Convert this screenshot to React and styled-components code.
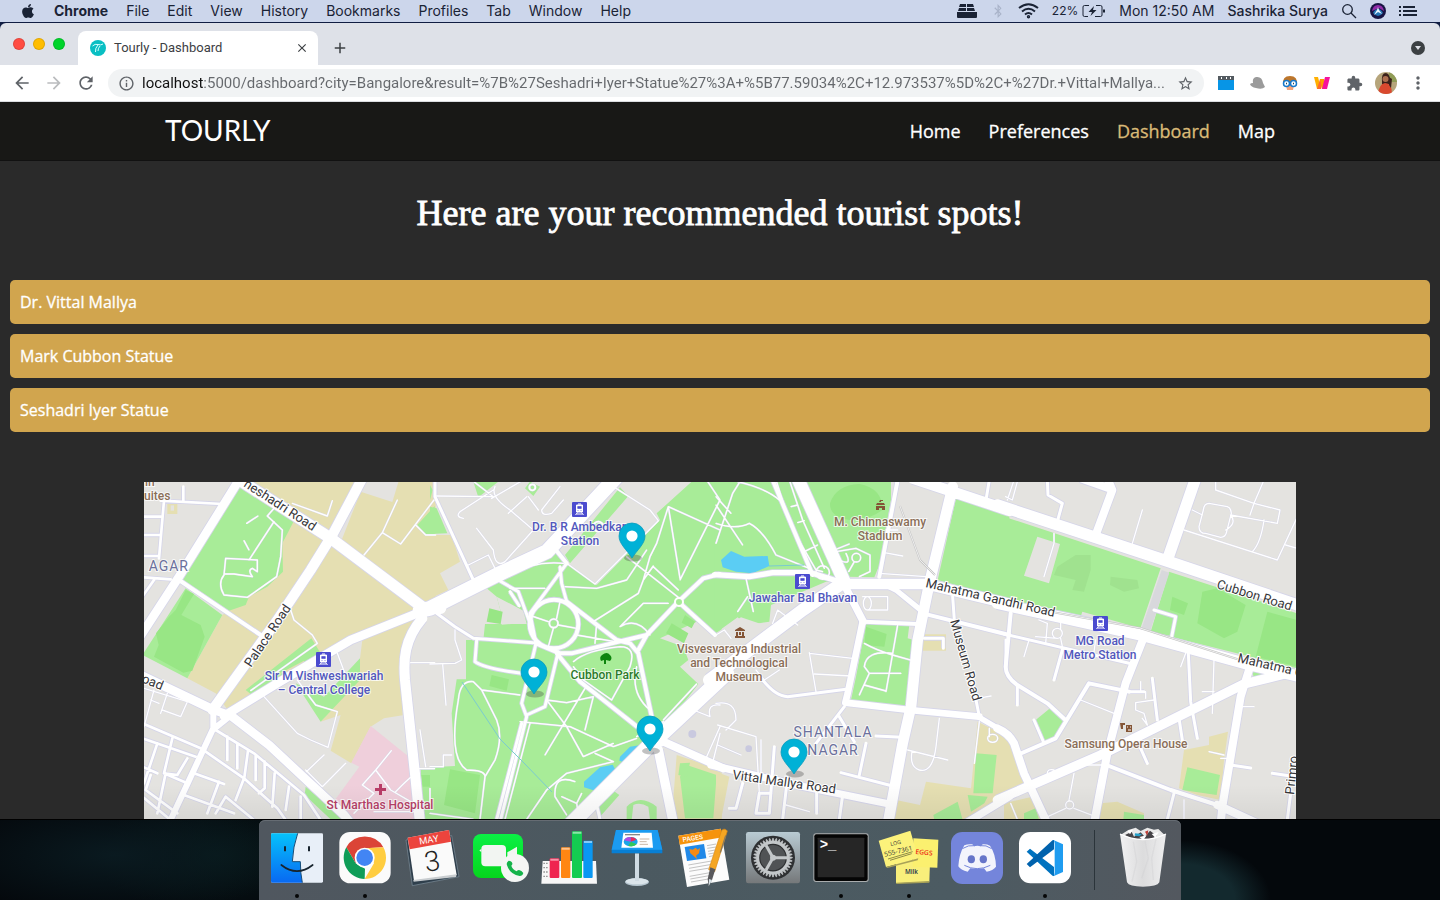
import React from "react";
import styled, { createGlobalStyle } from "styled-components";
import { FaApple, FaBluetoothB } from "react-icons/fa";
import {
  MdArrowBack, MdArrowForward, MdRefresh, MdInfoOutline, MdStarBorder,
  MdClose, MdAdd, MdMoreVert, MdExtension,
} from "react-icons/md";

const GlobalStyle = createGlobalStyle`
  * { box-sizing: border-box; }
  body { margin: 0; background: #060d12; }
  button { border: 0; padding: 0; background: none; color: inherit; font: inherit; cursor: pointer; }
  a { color: inherit; text-decoration: none; }
  svg { display: block; flex: none; }
`;

/* ---------- desktop and menu bar ---------- */

const Desktop = styled.div`
  display: flex;
  flex-direction: column;
  height: 100vh;
  overflow: hidden;
  background:
    radial-gradient(90px 60px at 82% 100%, #13292e 60%, transparent 100%),
    radial-gradient(180px 60px at 8% 95%, #0a1a20, transparent 100%),
    radial-gradient(120px 60px at 15% 95%, #081a1c, transparent 100%),
    #04080c;
`;

const MenuBar = styled.header`
  display: flex;
  justify-content: space-between;
  align-items: center;
  height: 22px;
  padding: 0 22px 0 20px;
  background: #ccd6eb;
  color: #1a2335;
  font: 500 14px/22px Inter, sans-serif;
  white-space: nowrap;
  flex: none;
`;

const MenuGroup = styled.nav`
  display: flex;
  align-items: center;
  gap: 18px;
`;

const MenuItem = styled.button`
  font-weight: ${(p) => (p.$strong ? 700 : 400)};
`;

const StatusGroup = styled.div`
  display: flex;
  align-items: center;
  gap: 13px;
`;

const Battery = styled.span`
  display: flex;
  align-items: center;
  gap: 4px;
  font-size: 12px;
  font-weight: 400;
`;

const StatusText = styled.span`
  font-weight: ${(p) => (p.$strong ? 500 : 400)};
  font-size: 14px;
`;

/* ---------- browser window ---------- */

const Window = styled.section`
  display: flex;
  flex-direction: column;
  flex: 1;
  min-height: 0;
  border-top: 1px solid #101d42;
  border-bottom: 1px solid #000;
  background: #101d42;
`;

const TabStrip = styled.div`
  display: flex;
  align-items: center;
  height: 42px;
  padding: 0 14px 0 13px;
  border-radius: 6px 6px 0 0;
  background: #dee1e8;
  flex: none;
`;

const Lights = styled.div`
  display: flex;
  gap: 8px;
  width: 65px;
`;

const Light = styled.button`
  width: 12px;
  height: 12px;
  border-radius: 50%;
  background: ${(p) => p.$color};
  box-shadow: inset 0 0 0 1px rgba(0, 0, 0, 0.12);
`;

const Tab = styled.div`
  display: flex;
  align-items: center;
  align-self: flex-end;
  gap: 8px;
  width: 240px;
  height: 34px;
  padding: 0 9px 0 12px;
  border-radius: 8px 8px 0 0;
  background: #fff;
  color: #3c4043;
  font: 13px/16px Roboto, sans-serif;
`;

const TabTitle = styled.span`
  flex: 1;
`;

const NewTab = styled.button`
  margin: 8px 0 0 13px;
  color: #3c4043;
`;

const TabSearch = styled.button`
  display: grid;
  place-items: center;
  width: 16px;
  height: 16px;
  margin: 8px 0 0 auto;
`;

const Toolbar = styled.div`
  display: flex;
  align-items: center;
  height: 37px;
  padding: 0 6px;
  background: #fff;
  border-bottom: 1px solid #dadce0;
  flex: none;
`;

const ToolButton = styled.button`
  display: grid;
  place-items: center;
  width: 32px;
  height: 32px;
  color: ${(p) => (p.$faded ? "#babcbe" : "#5f6368")};
`;

const AddressBar = styled.label`
  display: flex;
  align-items: center;
  flex: 1;
  gap: 7px;
  height: 28px;
  margin: 0 6px;
  padding: 0 10px;
  border-radius: 14px;
  background: #f1f3f4;
  color: #5f6368;
`;

const AddressInput = styled.input`
  flex: 1;
  min-width: 0;
  border: 0;
  padding: 0;
  outline: 0;
  font: 15px/20px Roboto, sans-serif;
  background: linear-gradient(90deg, #111 62px, #65686c 62px);
  background-clip: text;
  -webkit-background-clip: text;
  color: transparent;
  text-overflow: ellipsis;
`;

/* ---------- site ---------- */

const Page = styled.main`
  flex: 1;
  min-height: 0;
  overflow: hidden;
  background: #2a2a2a;
  color: #fff;
  font-family: "Open Sans", sans-serif;
`;

const SiteHeader = styled.header`
  display: flex;
  justify-content: space-between;
  align-items: center;
  height: 59px;
  padding: 0 165px;
  background: #181816;
  border-bottom: 1px solid #111;
`;

const Brand = styled.a`
  padding-bottom: 2px;
  font: 400 28px/32px Lato, sans-serif;
`;

const SiteNav = styled.nav`
  display: flex;
  gap: 28px;
`;

const SiteLink = styled.a`
  font-size: 18px;
  line-height: 28px;
  color: ${(p) => (p.$active ? "#d9ba77" : "#fff")};
  -webkit-text-stroke: 0.3px currentColor;
`;

const Title = styled.h1`
  margin: 30px 0 45px;
  font: 400 36px/44px "Liberation Serif", serif;
  text-align: center;
  -webkit-text-stroke: 0.8px #fff;
`;

const SpotList = styled.ul`
  display: flex;
  flex-direction: column;
  gap: 10px;
  margin: 0 10px 50px;
  padding: 0;
  list-style: none;
`;

const Spot = styled.li`
  padding: 10px;
  border-radius: 5px;
  background: #d1a54e;
  font-size: 16px;
  line-height: 24px;
  -webkit-text-stroke: 0.3px #fff;
`;

const MapFrame = styled.section`
  width: 80%;
  margin: 0 auto;
  background: #e4e3e0;

  svg {
    width: 100%;
    height: auto;
  }
`;

/* ---------- map drawing ---------- */

const G = "#a8ec98", DG = "#98e685", SAND = "#e5dfb2", PINK = "#efcfdb", WATER = "#5bcdf4", LAND = "#e4e3e0";

/* Four adjoining tiles; each is drawn at three units to the pixel. */
const TILES = [
  {
    x: 144,
    areas: [
      [SAND, "M300 0H635L555 165L440 85Z M650 35L745 66L765 0H875V395H830L585 200Z M450 110L550 185L825 392L600 485L250 688L215 640L130 595L235 405L255 392Z M655 480L825 410L770 540L776 706L720 715L680 740L622 850L560 812L590 705L530 725L640 600Z M70 66H100V102H70Z"],
      [LAND, "M80 76H90V92H80Z"],
      [G, "M285 20L450 122L415 190L417 275L370 320L315 350L305 375L255 392L110 295Z M125 325L235 405L130 595L-5 525Z M502 475L530 520L330 650L305 630Z M648 535V600L530 725L455 610L540 650Z M485 920L600 1018H560L482 945Z M872 78L820 135L845 162H872Z M830 868H875V1020H840Z"],
      [DG, "M125 330L150 342L112 405L170 435L182 470L145 572L118 578L30 530L44 495L36 460L75 410L95 390Z M832 885H860V920H836Z"],
      [PINK, "M680 738L800 835L820 1020H612L575 957L646 860L622 848Z"],
      [SAND, "M408 580L480 542L485 560L440 580Z"],
    ],
    roads: [
      [4, "M390 85L370 108L415 150L410 230L398 290L310 352L240 345Q220 310 240 285L245 235L340 240V275L325 265Q310 270 325 290L290 285L270 282H240M390 125L315 240M308 130L342 108M300 182L315 210M445 70L550 108L565 62M440 390L450 420L505 465L520 490L320 632M660 225L715 158L760 60M715 158L770 192L870 60M815 135L845 165H875M460 600L500 655L515 675L580 695L552 802L500 780L460 760L360 650M580 520L610 600M487 875L540 825M485 870L535 920L605 850M630 1000L690 940L655 915L695 870L742 812M695 870L740 930L800 965M755 935Q790 900 800 892M690 995H820M800 548H872M828 750L845 860M820 866H872M20 660L45 670M0 740L30 630M70 640L50 700M0 625L130 665L110 710L55 690"],
      [8, "M50 62L235 72M60 62L45 235M-5 110H50M-5 165H48M-5 228H45M118 20V62M-5 292L80 298M-5 350L30 300M-5 730L170 805M215 750L330 820L480 945L530 1020M185 815L300 895L400 985L425 1020M-5 775L155 830M85 775L60 880L130 910M40 790L0 910M250 770V840M280 790V865M312 812L300 900M335 825V900M362 845V925L345 940M392 880L385 980M435 920L425 990M470 950V1020M300 895L275 960M130 835L100 885L60 880M65 880L40 1000M-5 860L40 880M20 885L5 930L100 1000M150 880L240 912M120 945L270 1000M225 905L190 1000M215 1000L245 950L330 1020M-5 950L80 1020"],
      [12, "M105 300L350 465"],
      [18, "M208 690V745L75 1030M262 705L208 748"],
      [26, "M285 0L105 290L-15 475M845 390L620 480L400 610L240 708M-10 585L210 690L262 708L375 795L600 1005L620 1030"],
      [30, "M655 -5L565 165L500 270L400 420L205 690M835 415C780 480 778 540 783 600L815 900L828 1030"],
      [34, "M278 -5L560 175L840 385H890"],
    ],
  },
  {
    x: 430,
    areas: [
      [G, "M785 5H875V470L850 462L800 425L690 475L760 500L775 540L750 560L805 612L650 815L425 1020H0V862L75 858L65 700L80 598H108V480H160L165 432H290L280 392L215 405L200 350L170 325L205 300L365 205L410 252L500 315L690 120L680 100Z M130 5H205L145 52Z M0 80L20 85L52 160L0 162Z M405 225L570 22L595 48L420 250Z M300 5L330 20L310 48L285 25Z"],
      [LAND, "M200 350L280 392L272 430L215 434V405Z M875 610L640 830L425 1020H875Z"],
      [SAND, "M-5 165H65L90 245L30 280L55 330L-5 358Z M740 825L875 870V1020H725Z"],
      [G, "M770 855L860 885L850 1015H765L750 890Z M0 15L8 30L0 60Z M590 980Q630 940 680 980V1020H590Z M540 925L568 945L510 1010L490 985Z"],
      [DG, "M178 385L218 395L212 432L170 425Z M185 585L237 598L230 632L178 618Z M60 868L150 885L135 1000L42 975Z M725 430L775 460L762 490L708 460Z M765 405L795 425L785 445L755 428Z"],
      [G, "M750 850L780 848L770 890L745 885Z"],
      [LAND, "M610 975Q630 965 655 980L660 1020H605Z"],
      [WATER, "M570 830L600 800L628 796L632 810L585 848L568 842Z M462 905L510 862L548 854L562 880L495 932L462 922Z"],
      ["#c9c9df", "M775 762a12 12 0 1 0 24 0a12 12 0 1 0 -24 0Z"],
    ],
    roads: [
      [4, "M125 0L190 50L20 48M195 20Q180 50 240 90L310 150L225 245Q195 265 190 210L140 145M280 0L185 55M290 50L235 100M295 50L325 90M390 20L335 90Q335 110 365 100L400 60M115 255L175 225L195 265M190 30L90 95Q75 110 100 115M410 250L495 312L685 122L660 90L550 20M715 80L680 190L660 230L640 300L625 340L490 425M715 80L870 150M715 80L750 295M830 0L870 60M750 300L870 60M590 230L755 360M670 260L745 330M670 258L640 300M215 300Q300 240 400 250M240 325H345M405 320L500 325L590 300L650 210M570 440L640 370H715M570 440Q620 410 660 465M495 490L500 430M440 465L555 485M390 365L380 415M305 408L355 425M385 435L440 445M370 445L355 500M430 545Q470 510 570 500Q620 500 600 560L545 660L460 600L430 560M620 560Q600 640 660 690M0 552L75 550L95 540L75 480V450M38 552L48 675M155 630L270 645M155 630L130 605Q90 600 85 660C60 800 80 850 110 870Q165 870 165 890L150 1018M155 630L200 720Q220 770 195 840L165 890M350 660L410 668L490 650M490 650L465 750M465 625L345 825M350 660L410 740L460 830M270 725L420 740L550 800M300 730L225 1018M495 820L550 845L410 880L350 930L290 1018M550 800L620 775M460 830L550 790M435 905Q370 880 375 950L410 1005M395 950L440 970L455 940M440 970L445 1000M700 720L800 612M620 770L700 725M0 1000L130 1018M65 825H40V860H0M790 690L840 710Q830 670 870 675M870 740L830 830M850 840L870 760M0 970V925"],
      [9, "M15 0V50L130 300M20 400L75 440L130 475L310 488M140 480L135 545Q160 565 275 580M410 250L300 400L318 490L275 670L290 710L212 1018M275 730L200 1018M390 260L395 310L410 365M205 300L265 335L300 430M385 515L345 680L290 705M240 335L268 378M500 975L510 1018"],
      [12, "M445 432A73 73 0 1 0 299 432A73 73 0 1 0 445 432M318 490L390 520H425L545 490L650 465L745 365L820 295L870 282M380 520L450 605L520 660L640 755M410 365L560 480L600 490L625 520L665 710M745 365L855 465M650 465L625 510M370 200L410 250"],
      [5, "M384 430a13 13 0 1 0 -26 0a13 13 0 1 0 26 0M520 140a15 15 0 1 0 -30 0a15 15 0 1 0 30 0M316 22a9 9 0 1 0 -18 0a9 9 0 1 0 18 0"],
      [24, "M665 800L700 785L880 865"],
      [28, "M685 810L730 1030"],
      [44, "M-30 392L0 385L200 285L350 215L560 -10M890 580L655 800L420 1035"],
    ],
  },
  {
    x: 716,
    areas: [
      [G, "M-5 5H525V60L490 255L475 292L395 290L385 305H330L165 375L160 425L90 436L65 412L-5 462Z M720 55L880 110V360L665 300Z M450 430L580 435L575 475L600 482L580 670L560 680L405 660L420 590Z"],
      [LAND, "M-5 462L75 412L160 440L250 400L-5 590Z"],
      [DG, "M342 70Q360 15 430 12Q500 25 500 90Q450 125 400 120Q340 110 342 70Z M450 440L512 462L505 500L445 495Z"],
      [SAND, "M620 463H690V512H620Z M785 725L875 770V960L740 1020H530L540 960L612 975L630 905L765 925Z M0 875L40 890L15 1020H0Z"],
      [G, "M780 820L842 825L830 940H772Z M652 1005L725 965L740 1020H655Z M755 945L815 950L805 970L765 995Z"],
      [WATER, "M15 240L45 213L85 230L155 228L160 258L110 280L60 275L20 262Z"],
      ["#c9c9df", "M88 806a10 10 0 1 0 20 0a10 10 0 1 0 -20 0Z"],
    ],
    roads: [
      [4, "M0 190L50 40L75 0M0 75L80 195M0 50L45 100M65 5Q150 25 190 60M0 130Q60 150 100 130Q140 150 180 225L280 265M90 295L112 395M95 350L65 395M180 0L225 140L300 270L320 275M220 0L260 120L325 265M225 80L245 75M245 128L265 122M265 215L305 195M300 275a10 10 0 1 0 40 5a10 10 0 1 0 -40 -5M355 210L400 192M360 215L420 205L462 225V275L430 290M370 240Q410 260 390 220M398 275L415 245M408 233a13 13 0 1 0 26 0a13 13 0 1 0 -26 0M440 350H515V390H455M442 370a12 20 0 1 0 24 0a12 20 0 1 0 -24 0M505 218L560 228M510 150H545M490 280L630 290M445 490Q480 510 530 525L590 542M545 435L510 635M530 520Q450 510 445 560L460 580H555M460 580L430 645M445 615L510 633M280 520L410 535M280 518L300 635M295 582L405 588M120 570L145 600L190 570M170 430L185 390L245 435M0 465L25 450L45 475M0 670Q60 660 60 720L30 750M5 735L120 770L130 940M5 795L75 825M135 780V880M790 725L775 850M785 655L825 648M820 745V770M815 775a15 12 0 1 0 30 0a15 12 0 1 0 -30 0M575 810L695 840M670 715L660 800Q650 880 610 870Q580 860 588 815M210 975L280 995"],
      [9, "M175 800L160 1000H120L130 940H165M215 890L200 1018M80 910L60 985H40M302 925V1000M380 945L370 1018M450 790L430 885M375 878L530 918M480 768L560 772M385 680L300 790M370 710L415 785M140 600Q180 650 215 650L390 628M710 350L715 420M770 610L790 710M625 475H682V505M820 0L810 60M870 480V560"],
      [12, "M170 0L290 285M545 0L490 290M445 425L605 432M620 400L880 465"],
      [16, "M-5 284L100 290L170 278H285L370 305M510 315L540 330L620 395M790 712L880 765"],
      [20, "M440 425L395 640L388 668L580 690L790 710"],
      [22, "M-15 855L240 915L520 972M385 315L442 425M740 1035L880 950"],
      [32, "M710 20L640 310L605 480L585 680L560 790L515 1035M590 -5L880 92M380 312H630L880 372"],
      [38, "M245 -5L385 305L260 390L-20 600"],
    ],
  },
  {
    x: 1004,
    areas: [
      [G, "M0 110L470 265L408 448L0 362Z M495 275L880 400V565L440 455Z M140 683L182 720L155 775L120 785L95 720Z M745 575L780 578L750 595Z"],
      [LAND, "M100 170L168 192L135 310L60 287Z M235 395L375 435L370 455L230 410Z"],
      [DG, "M595 335L640 325L725 375L700 455L660 475L580 430Z M790 395L880 420V560L755 530Z M505 350L552 370L540 405L498 390Z"],
      ["#a0e28f", "M215 225H260V270L240 335L205 330L215 300L150 285L160 260Z M320 290L400 300L405 325L360 335L318 315Z"],
      [SAND, "M0 780L40 800L75 900L0 945Z M540 810L615 795V770L672 755L660 840L650 960L580 945L525 925Z M0 970L85 950L120 1020H0Z M290 970L340 965L420 1000V1020H280Z"],
      [G, "M550 862L648 885L638 945L535 930Z M60 1000L95 985L105 1020H60Z M360 995L420 1005V1020H358Z"],
      ["#d8d8dc", "M473 270L496 278L438 455L412 448Z"],
    ],
    roads: [
      [4, "M10 60L30 0M5 50L25 60L40 5M385 190L415 90M120 290L150 190V160M540 150L820 240L880 110M635 0V30L750 70L780 0M750 70L828 90L820 130L680 105M738 105L750 70M780 120Q770 190 745 215M880 205L845 195M615 70Q600 70 598 90L585 140Q585 160 605 160L650 172Q665 172 668 155L682 100Q682 85 670 80Z M680 105Q700 130 665 150M565 90L595 105M60 530L75 480M105 420L130 430L125 490M95 470L160 475M145 460a15 15 0 1 0 30 0a15 15 0 1 0 -30 0M170 475L175 500M170 430V445M270 515L275 480M230 660L330 700M410 605V635H425V655M450 660L395 668V690L420 700L430 735M415 715L430 735M630 540L625 700M595 635H630M545 520L530 560M715 680H750M615 815L660 825M650 835H680M210 880L195 960M185 975a12 12 0 1 0 24 0a12 12 0 1 0 -24 0M185 985L120 1015M210 985L275 1010M130 880Q130 865 150 870V885M20 970L40 1018M540 960V1018M245 855H310"],
      [9, "M130 0L132 45L175 70L160 125M375 635H420M445 595L460 720M410 805L430 850M450 390L515 410L502 475M500 475L380 450M90 720L118 785M40 615V675M175 510L150 600M0 462L375 550M553 520L560 665L580 775M525 715L535 780M680 855L740 864M805 880L875 890M510 940L490 1018M860 940L850 1018"],
      [12, "M20 400L5 560Q5 590 40 615L130 670L182 718M40 825L155 775L255 610L375 635M315 858L500 930L640 975"],
      [24, "M310 -5L325 30L275 165M230 -5L315 25M-20 745Q15 760 30 790L60 880L130 1030M420 470L365 610L310 820L270 1030M735 570L710 650L655 980L650 1030M640 975L760 1030"],
      [28, "M-20 960L290 825L720 612L850 580"],
      [34, "M-20 75L480 240L890 378M575 -5L490 240M-20 370L420 467L740 555L890 590"],
    ],
  },
];

const MAP_LABELS = [
  ["in", 145, 486, "#8a6e57", "start"], ["uites", 144, 500, "#8a6e57", "start"],
  ["Sir M Vishweshwariah", 324, 680, "#5257bd"], ["– Central College", 324, 694, "#5257bd"],
  ["St Marthas Hospital", 380, 809, "#b64068"],
  ["Dr. B R Ambedkar", 579, 531, "#5257bd"], ["Station", 580, 545, "#5257bd"],
  ["Cubbon Park", 605, 679, "#2b7a2b"],
  ["Jawahar Bal Bhavan", 803, 602, "#5257bd"],
  ["M. Chinnaswamy", 880, 526, "#8a6e57"], ["Stadium", 880, 540, "#8a6e57"],
  ["Visvesvaraya Industrial", 739, 653, "#8a6e57"], ["and Technological", 739, 667, "#8a6e57"], ["Museum", 739, 681, "#8a6e57"],
  ["MG Road", 1100, 645, "#5257bd"], ["Metro Station", 1100, 659, "#5257bd"],
  ["Samsung Opera House", 1126, 748, "#8a6e57"],
];

const ROAD_LABELS = [
  ["neshadri Road", 243, 486, 33], ["Palace Road", 251, 668, -56], ["oad", 141, 682, 22],
  ["Mahatma Gandhi Road", 925, 587, 13], ["Museum Road", 950, 621, 74],
  ["Vittal Mallya Road", 732, 779, 8], ["Cubbon Road", 1216, 588, 17],
  ["Mahatma G", 1237, 662, 13], ["Primro", 1294, 795, -84],
];

const DISTRICTS = [["AGAR", 189, 571, "end"], ["SHANTALA", 833, 737, "middle"], ["NAGAR", 833, 755, "middle"]];
const PINS = [[632, 558], [534, 694], [650, 751], [794, 774]];
const STATIONS = [[579.5, 509.5], [323.5, 659.5], [802.5, 581.5], [1100.5, 623.5]];

const PlaceText = styled.text`
  font: 400 12px Roboto, sans-serif;
  paint-order: stroke;
  stroke: rgba(255, 255, 255, 0.75);
  stroke-width: 2px;
`;

const SpotText = styled(PlaceText)`
  font-weight: 500;
`;

const RoadText = styled(PlaceText)`
  font-size: 13px;
  stroke: #fff;
`;

const DistrictText = styled(PlaceText)`
  font-size: 14px;
  letter-spacing: 1px;
`;

function CityMap() {
  return (
    <svg viewBox="144 482 1152 340" role="img" aria-label="Map of recommended spots">
      <defs>
        <linearGradient id="mapShade" x1="0" y1="0" x2="0" y2="1">
          <stop offset="0" stopColor="#000" stopOpacity="0" />
          <stop offset="1" stopColor="#000" stopOpacity="0.06" />
        </linearGradient>
      </defs>
      <rect x="144" y="482" width="1152" height="340" fill={LAND} />
      {TILES.map((t) => (
        <g key={t.x} transform={`translate(${t.x} 480) scale(${1 / 3})`}>
          {t.areas.map(([fill, d], i) => <path key={i} d={d} fill={fill} />)}
        </g>
      ))}
      <g fill="none" strokeLinejoin="round">
        {TILES.map((t) => (
          <g key={t.x} transform={`translate(${t.x} 480) scale(${1 / 3})`} stroke="#d5d5e9">
            {t.roads.map(([w, d], i) => <path key={i} d={d} strokeWidth={w + (w > 5 ? 5 : 2)} />)}
          </g>
        ))}
        {TILES.map((t) => (
          <g key={t.x} transform={`translate(${t.x} 480) scale(${1 / 3})`} stroke="#fff">
            {t.roads.map(([w, d], i) => <path key={i} d={d} strokeWidth={w} strokeLinecap="round" />)}
          </g>
        ))}
        <path d="M462 682L500 739L523 762L552 792M769 566L804 565" stroke="#7bcbd0" />
        <path d="M900 506L920 560L935 575M1052 612L1140 628L1240 660" stroke="#c4c4c4" strokeWidth="2" />
        <path d="M900 506L920 560L935 575M1052 612L1140 628L1240 660" stroke="#eee" strokeWidth="1" />
        <circle cx="679" cy="602" r="4" fill={G} stroke="#fff" strokeWidth="2" />
      </g>
      {STATIONS.map(([x, y]) => (
        <g key={x} transform={`translate(${x} ${y})`}>
          <rect x="-7.500" y="-7.500" width="15" height="15" rx="1" fill="#4b4bcf" />
          <path d="M-3 -4.500H3V2.500H-3Z M-1.500 -5.500H1.500M-2 3L-4 5.500M2 3L4 5.500M-3 4.500H3" stroke="#fff" fill="#fff" />
          <path d="M-1.800 -3H1.800V-1H-1.800Z M-2 1H-1M1 1H2" fill="#4b4bcf" stroke="#4b4bcf" strokeWidth="0.600" />
        </g>
      ))}
      <path d="M379 784h3v4h4v3h-4v4h-3v-4h-4v-3h4Z" fill="#b83c67" />
      <path d="M604 664v-4l-3 1q-2-4 1-6q5-4 8 0q3 3 0 6l-4-1v4Z" fill="#0d850d" />
      <path d="M735 630l5-3l5 3v1h-10Z M736 632h2v4h4v-4h2v4h1v2h-10v-2h1Z M739 632h2v3h-2Z" fill="#845536" />
      <path d="M876 506h9v4h-3v-2h-3v2h-3Z M876 505l1-2h7l1 2Z M879 502l1-2h1v2Z M880 500h3v1h-3Z" fill="#845536" />
      <path d="M1120 723h5v2h-2v4h-2Z M1126 725h6v7h-6Z" fill="#845536" />
      <path d="M1127 727h1M1130 727h1M1128 730h3" stroke="#fff" />
      {MAP_LABELS.map(([s, x, y, c, a]) => (
        <SpotText key={s + y} x={x} y={y} fill={c} textAnchor={a || "middle"}>{s}</SpotText>
      ))}
      {ROAD_LABELS.map(([s, x, y, r]) => (
        <RoadText key={s + x} fill="#37373a" transform={`translate(${x} ${y}) rotate(${r})`}>{s}</RoadText>
      ))}
      {DISTRICTS.map(([s, x, y, a]) => (
        <DistrictText key={s + x} x={x} y={y} fill="#6b709c" textAnchor={a}>{s}</DistrictText>
      ))}
      {PINS.map(([x, y]) => (
        <g key={x} transform={`translate(${x} ${y})`}>
          <ellipse cx="1" cy="0" rx="9" ry="3.500" fill="#333" opacity="0.3" />
          <path d="M0 0C-5 -8 -13 -14 -13 -22A13 13 0 0 1 13 -22C13 -14 5 -8 0 0Z" fill="#00b1d6" stroke="#0a9cbd" strokeWidth="0.800" />
          <circle cy="-22" r="5.600" fill="#fff" />
        </g>
      ))}
      <rect x="144" y="785" width="1152" height="37" fill="url(#mapShade)" />
    </svg>
  );
}

/* ---------- dock ---------- */

const DockArea = styled.footer`
  display: flex;
  justify-content: center;
  height: 80px;
  flex: none;
`;

const Dock = styled.nav`
  display: flex;
  padding: 0 4px;
  border-radius: 6px 6px 0 0;
  background: linear-gradient(90deg, #50575f, #4b5960 40%, #4c5b62 75%, #53585f);
  box-shadow: inset 0 1px 0 #666c73;
`;

const DockSlot = styled.button`
  width: 68px;
  height: 80px;
`;

const DockDivider = styled.span`
  width: 1px;
  height: 60px;
  margin: 10px 14px 0 15px;
  background: #2b343a;
`;

const IconText = styled.text`
  font-family: ${(p) => p.$family || "Roboto"}, sans-serif;
  font-size: ${(p) => p.$size}px;
  font-weight: ${(p) => p.$weight || 400};
`;

const GEAR_TEETH = Array.from({ length: 36 }, (_, i) => i * 10);

/* Each artwork is drawn at three units to the pixel; x is the left edge of its view box. */
const DOCK_APPS = [
  { name: "Finder", x: 39, running: true, art: (
    <>
      <rect x="63" y="55" width="156" height="148" rx="4" fill="#e8eff8" />
      <path d="M67 55H143Q129 95 127 140H151Q151 175 157 203H67Q63 203 63 199V59Q63 55 67 55Z" fill="url(#finderBlue)" />
      <path d="M143 55Q129 95 127 140H151Q151 175 157 203" fill="none" stroke="#174d78" strokeWidth="3" />
      <path d="M105 94V109M177 94V109" stroke="#18242e" strokeWidth="6" />
      <path d="M94 150Q141 187 188 150" fill="none" stroke="#18242e" strokeWidth="5" strokeLinecap="round" />
    </>
  ) },
  { name: "Chrome", x: 243, running: true, art: (
    <>
      <rect x="268" y="51" width="154" height="154" rx="32" fill="#fbfbfb" />
      <path d="M289 97A64 64 0 0 1 400 97L345 100L317 145Z" fill="#db4437" />
      <path d="M289 97L317 145L345 161L344 192A64 64 0 0 1 289 97Z" fill="#0f9d58" />
      <path d="M400 97A64 64 0 0 1 344 192L372 145L345 100Z" fill="#ffcd40" />
      <circle cx="344" cy="128" r="30" fill="#fff" />
      <circle cx="344" cy="128" r="25" fill="#4285f4" />
    </>
  ) },
  { name: "Calendar", x: 447, art: (
    <>
      <path d="M468 75L605 62L627 185L487 212Z" fill="#2f3f4c" stroke="#80919d" strokeWidth="2" />
      <path d="M473 68L597 45L620 180L492 197Z" fill="#fafafa" />
      <path d="M473 68L597 45L603 80L479 103Z" fill="#ec443d" />
      <path d="M490 195L620 178L618 186L491 200Z" fill="#c9cdd0" />
      <IconText $size="28" fill="#fff" textAnchor="middle" transform="translate(538 84) rotate(-9)">MAY</IconText>
      <IconText $size="84" $weight="300" fill="#222" textAnchor="middle" transform="translate(551 167) rotate(-9)">3</IconText>
    </>
  ) },
  { name: "FaceTime", x: 651, art: (
    <>
      <rect x="669" y="57" width="150" height="132" rx="24" fill="url(#callGreen)" />
      <rect x="694" y="90" width="74" height="64" rx="12" fill="#f2f5f2" />
      <path d="M772 112L801 95V145L772 130Z M688 106L694 102V112Z" fill="#f2f5f2" />
      <circle cx="795" cy="159" r="42" fill="#f4f6f4" />
      <path d="M776 137q-8 5-5 14q9 28 38 32q9 0 11-9q-5-8-13-9q-4 0-7 4q-13-6-16-17q4-3 3-7q-2-8-11-8Z" fill="#14b34a" />
    </>
  ) },
  { name: "Numbers", x: 855, art: (
    <g transform="translate(930 0)">
      <path d="M-52 138H108L111 206H-56Z" fill="#f7f7f7" />
      <path d="M-50 145H-36M-50 158H-36M-50 171H-36M-50 184H-36" stroke="#999" strokeWidth="4" strokeDasharray="5 3" />
      <rect x="-31" y="130" width="29" height="59" rx="3" fill="#ef2550" />
      <rect x="3" y="97" width="28" height="92" rx="3" fill="#ff8613" />
      <rect x="36" y="49" width="30" height="140" rx="3" fill="#14cc51" />
      <rect x="70" y="77" width="28" height="112" rx="3" fill="#0a97f2" />
      <path d="M-29 134H-4M5 101H29M38 53H64M72 81H96" stroke="#fff" opacity=".5" strokeWidth="6" />
    </g>
  ) },
  { name: "Keynote", x: 129, art: (
    <>
      <ellipse cx="231" cy="201" rx="36" ry="12" fill="#b7c7d1" />
      <ellipse cx="231" cy="199" rx="34" ry="9" fill="#dbe5eb" />
      <path d="M225 115H237V198H225Z" fill="#cfdbe3" />
      <path d="M168 45H293L307 104V115H155V104Z" fill="#087fd4" />
      <path d="M168 45H293L307 104H155Z" fill="#1b9bf1" />
      <path d="M190 53H275L279 98H184Z" fill="#fff" />
      <path d="M195 59H240" stroke="#888" strokeWidth="4" />
      <ellipse cx="212" cy="80" rx="21" ry="14" fill="#1aa5e8" />
      <path d="M212 80V66A21 14 0 0 1 230 74Z" fill="#ed2c5c" />
      <path d="M212 80L230 88A21 14 0 0 1 205 93Z" fill="#34c759" />
      <path d="M212 80L192 76A21 14 0 0 1 212 66Z" fill="#b44be0" />
      <path d="M239 72H268M239 80H260M239 88H264" stroke="#c9b8a8" strokeWidth="3" />
    </>
  ) },
  { name: "Pages", x: 333, art: (
    <>
      <path d="M355 62L482 41L508 194L381 216Z" fill="#fcfcfc" />
      <path d="M355 62L482 41L487 67L359 89Z" fill="#f6930d" />
      <IconText $size="20" $weight="500" fill="#fff" transform="translate(369 81) rotate(-9)">PAGES</IconText>
      <path d="M374 96L432 87L439 130L381 138Z" fill="#2189e8" />
      <path d="M388 102L398 104L407 98L413 104L420 99L417 115L408 122L411 132L400 122L391 115Z" fill="#f58a15" />
      <path d="M441 92L468 87M442 100L468 96M444 109L465 105M445 117L462 114M447 125L460 122M385 150L455 138M387 160L455 148M388 169L455 158M389 184L455 172M391 192L448 182M393 201L445 192" stroke="#c4c4c4" strokeWidth="3" />
      <path d="M485 46Q495 38 502 48L464 170L446 164Z" fill="#f5a623" stroke="#d9870f" strokeWidth="2" />
      <path d="M451 157L466 163L456 195L446 214L443 192Z" fill="#59595c" />
      <path d="M447 192L456 195L446 214Z" fill="#d9e3e8" />
      <path d="M497 62L481 113" stroke="#8c7a5a" strokeWidth="4" />
    </>
  ) },
  { name: "System Preferences", x: 537, art: (
    <>
      <rect x="558" y="51" width="162" height="154" rx="7" fill="url(#steel)" />
      <circle cx="639" cy="128" r="66" fill="#2e3032" />
      {GEAR_TEETH.map((a) => <path key={a} d="M636 79L638 70H640L642 79Z" fill="#c3c7c9" stroke="#c3c7c9" strokeWidth="2" transform={`rotate(${a} 639 128)`} />)}
      <circle cx="639" cy="128" r="46" fill="none" stroke="#c3c7c9" strokeWidth="9" />
      <circle cx="639" cy="128" r="38" fill="#505355" />
      <path d="M639 128L618 91M639 128H682M639 128L618 165" stroke="#c3c7c9" strokeWidth="9" />
      <circle cx="639" cy="128" r="9" fill="#c3c7c9" />
    </>
  ) },
  { name: "Terminal", x: 741, running: true, art: (
    <>
      <rect x="760" y="55" width="166" height="146" rx="8" fill="#a9acad" />
      <rect x="763" y="58" width="160" height="140" rx="6" fill="#050505" />
      <rect x="773" y="68" width="140" height="119" rx="2" fill="#262626" />
      <IconText $family="Liberation Mono" $size="42" $weight="700" fill="#fff" x="779" y="103">&gt;_</IconText>
    </>
  ) },
  { name: "Stickies", x: 15, running: true, art: (
    <>
      <path d="M78 130L180 140L178 200L78 205Z" fill="#f9ef7b" />
      <path d="M130 70L205 74L202 158L128 155Z" fill="#fbf06f" />
      <path d="M26 77L121 47L145 130L48 156Z" fill="#fcf27b" />
      <path d="M48 156L145 130L143 136L52 159Z M78 203L178 198V203L80 207Z" fill="#a9a258" />
      <IconText $family="Open Sans" $size="16" fill="#333" transform="translate(62 93) rotate(-12)">LOG</IconText>
      <IconText $family="Open Sans" $size="20" fill="#333" transform="translate(44 125) rotate(-13)">555-7361</IconText>
      <IconText $family="Open Sans" $size="20" $weight="600" fill="#ee2c16" transform="translate(136 117) rotate(5)">EGGS</IconText>
      <IconText $family="Open Sans" $size="19" $weight="600" fill="#22324b" x="105" y="178">Milk</IconText>
      <path d="M54 132L128 110M60 136L125 116" stroke="#55542f" strokeWidth="2" />
    </>
  ) },
  { name: "Discord", x: 219, art: (
    <>
      <rect x="243" y="51" width="156" height="156" rx="34" fill="#7485db" />
      <path d="M283 91Q294 86 307 88L312 94Q322 91 333 94L338 88Q350 87 360 92Q377 116 378 155Q369 167 350 170L342 160Q320 164 301 160L293 170Q272 166 265 154Q267 117 283 91Z" fill="#f3f4fc" />
      <path d="M277 101Q295 89 315 92M365 101Q349 89 329 92M283 151Q321 171 361 151" fill="none" stroke="#7485db" strokeWidth="3" />
      <ellipse cx="304" cy="133" rx="11" ry="12" fill="#6675c9" />
      <ellipse cx="340" cy="133" rx="11" ry="12" fill="#6675c9" />
    </>
  ) },
  { name: "Visual Studio Code", x: 423, running: true, art: (
    <>
      <rect x="447" y="51" width="156" height="154" rx="34" fill="#fff" />
      <path d="M470 110L480 101L552 156L552 183Q548 184 545 180Z" fill="#0072bf" />
      <path d="M470 147L480 157L552 103L552 75Q548 74 545 78Z" fill="#0062ad" />
      <path d="M550 75L579 88V171L550 184Q554 180 554 172V86Q554 78 550 75Z" fill="#1f9cf0" />
    </>
  ) },
];

function DockIcon({ app }) {
  return (
    <DockSlot aria-label={app.name}>
      <svg width="68" height="80" viewBox={`${app.x} 15 204 240`} aria-hidden="true">
        {app.art}
        {app.running && <circle cx={app.x + 102} cy="243" r="6" fill="#050607" />}
      </svg>
    </DockSlot>
  );
}

function Trash() {
  return (
    <DockSlot aria-label="Trash">
      <svg width="68" height="80" viewBox="717 15 204 240" aria-hidden="true">
        <path d="M755 58L775 45L797 38L812 48L832 38L852 44L865 42L884 60L870 78H768Z" fill="#e9e9e9" />
        <path d="M765 60L785 50L792 65L812 52L824 65L840 47L860 62L846 72L792 74Z" fill="#454347" />
        <path d="M795 55L816 57L808 64L794 62Z" fill="#26a0c9" />
        <path d="M825 50L835 46L832 62Z" fill="#be3b32" />
        <path d="M773 48L790 43L780 58Z M845 57L866 51L856 68Z M808 66L830 61L820 76Z" fill="#fff" />
        <path d="M750 57Q818 90 888 57L868 202Q862 215 819 215Q777 215 771 202Z" fill="url(#trashFill)" />
        <path d="M750 57Q818 90 888 57" fill="none" stroke="#fff" strokeWidth="4" />
        <path d="M790 80L800 140L786 200M825 78L835 130L815 190M858 72L845 130L850 195" fill="none" stroke="#cfd0d2" strokeWidth="4" opacity="0.4" />
      </svg>
    </DockSlot>
  );
}

function SharedGradients() {
  return (
    <svg width="0" height="0" aria-hidden="true">
      <defs>
        <linearGradient id="finderBlue" x1="0" y1="0" x2="0" y2="1"><stop stopColor="#06c2fb" /><stop offset="1" stopColor="#0869f2" /></linearGradient>
        <linearGradient id="callGreen" x1="0" y1="0" x2="0" y2="1"><stop stopColor="#0bf045" /><stop offset="1" stopColor="#06d51d" /></linearGradient>
        <linearGradient id="steel" x1="0" y1="0" x2="0" y2="1"><stop stopColor="#b9cbd3" /><stop offset="1" stopColor="#75787a" /></linearGradient>
        <linearGradient id="trashFill" x1="0" y1="0" x2="1" y2="0"><stop stopColor="#f1f1f2" /><stop offset=".5" stopColor="#dcdcdd" /><stop offset="1" stopColor="#eeeeef" /></linearGradient>
      </defs>
    </svg>
  );
}

/* ---------- small icons ---------- */

const StackIcon = () => (
  <svg width="22" height="16" viewBox="0 0 22 16" fill="#1a2335"><path d="M4 1h6v3H3ZM11 1h6l1 3h-7ZM3 5h7v3H2ZM11 5h7l1 3h-8ZM1 9h20v5q0 1-1 1H2q-1 0-1-1Z" /></svg>
);
const WifiIcon = () => (
  <svg width="21" height="16" viewBox="0 0 21 16" fill="none" stroke="#1a2335" strokeWidth="2"><path d="M1 5Q10.500 -2.500 20 5M4 8.500Q10.500 3 17 8.500M7 11.500Q10.500 8.500 14 11.500" /><circle cx="10.500" cy="13.800" r="0.700" /></svg>
);
const BatteryIcon = () => (
  <svg width="24" height="14" viewBox="0 0 24 14" fill="none" stroke="#1a2335"><path d="M7 1.500H2.500Q1 1.500 1 3V11Q1 12.500 2.500 12.500H6M14 1.500H18.500Q20 1.500 20 3V11Q20 12.500 18.500 12.500H13" /><path d="M12 2L6.500 8H10L8.500 12L14.500 6H11Z" fill="#1a2335" stroke="none" /><path d="M22 5.500V8.500" strokeWidth="2" /></svg>
);
const SearchIcon = () => (
  <svg width="16" height="16" viewBox="0 0 16 16" fill="none" stroke="#1a2335" strokeWidth="1.300"><circle cx="6.500" cy="6.500" r="4.800" /><path d="M10 10L15 15" /></svg>
);
const SiriIcon = () => (
  <svg width="16" height="16" viewBox="0 0 16 16"><circle cx="8" cy="8" r="8" fill="#181443" /><path d="M2 8Q3 2 8 2Q13 2 14 8L9 5Z" fill="#8f2ba8" /><path d="M3 10Q5 6 8 6Q11 6 13 10Q8 16 3 10Z" fill="#298ccf" opacity="0.8" /><path d="M4 12L7 7L8 4L9 7L12 11L8 9Z" fill="#e8f5ff" /></svg>
);
const ListIcon = () => (
  <svg width="19" height="12" viewBox="0 0 19 12" stroke="#1a2335" strokeWidth="2"><path d="M0 2H2M0 6H2M0 10H2M4 2H16M4 6H18M4 10H18" /></svg>
);
const Favicon = () => (
  <svg width="16" height="16" viewBox="0 0 16 16"><circle cx="8" cy="8" r="8" fill="#09bfc3" /><path d="M2.500 6Q5 3.500 8 4.500T13 4M8 5Q5 8 5.500 12M10 6Q8 8 8 11" fill="none" stroke="#d8ffff" /></svg>
);
const CalendarExt = () => (
  <svg width="16" height="14" viewBox="0 0 16 14"><path d="M0 3H16V14H0Z" fill="#0795e6" /><path d="M0 0H16V4H0Z" fill="#535a60" /><path d="M3 2H4M8 2H9M12 2H13" stroke="#fff" strokeWidth="2" /></svg>
);
const HatExt = () => (
  <svg width="16" height="14" viewBox="0 0 16 14"><path d="M0 8Q1 7 3 7Q2 2 6 1Q12 0 13 7L15 11Q12 14 6 12Q1 11 0 8Z" fill="#9b9b9b" /></svg>
);
const OwlExt = () => (
  <svg width="16" height="16" viewBox="0 0 16 16"><path d="M1 10Q0 1 8 1Q16 1 15 10Q8 15 1 10Z" fill="#bd762b" /><path d="M4 10H12L11 15H5Z" fill="#f4a47a" /><circle cx="4.500" cy="8.500" r="3" fill="#fff" stroke="#1679cc" strokeWidth="1.500" /><circle cx="11.500" cy="8.500" r="3" fill="#fff" stroke="#1679cc" strokeWidth="1.500" /><path d="M4 8.500H5M11 8.500H12" stroke="#245" strokeWidth="1.500" /></svg>
);
const WExt = () => (
  <svg width="16" height="14" viewBox="0 0 16 14"><path d="M0 1H4L7 13H3Z" fill="#ffb000" /><path d="M6 3H10L7 13H3Z" fill="#ff6a2b" /><path d="M6 3H10L12 13H8Z" fill="#ff9c00" /><path d="M11 1H16L13 13H8Z" fill="#f6139b" /></svg>
);
const Avatar = () => (
  <svg width="22" height="22" viewBox="0 0 22 22"><clipPath id="avatarClip"><circle cx="11" cy="11" r="11" /></clipPath><g clipPath="url(#avatarClip)"><path d="M0 0H22V22H0Z" fill="#b6a57b" /><path d="M14 0H22V10H14Z" fill="#8f9c56" /><path d="M7 10Q6 1 11 1Q16 2 15 12L7 13Z" fill="#3b211b" /><circle cx="10.500" cy="7" r="3" fill="#ad6f50" /><path d="M3 22Q4 12 10 11Q17 11 17 22Z" fill="#d9492f" /><path d="M14 5L17 7L16 16L14 13Z" fill="#3b211b" /></g></svg>
);
const TabSearchIcon = () => (
  <svg width="14" height="14" viewBox="0 0 14 14"><circle cx="7" cy="7" r="7" fill="#3c4043" /><path d="M4 5H10L7 9Z" fill="#dee1e8" /></svg>
);

const MENUS = ["File", "Edit", "View", "History", "Bookmarks", "Profiles", "Tab", "Window", "Help"];
const SPOTS = ["Dr. Vittal Mallya", "Mark Cubbon Statue", "Seshadri Iyer Statue"];
const LINKS = ["Home", "Preferences", "Dashboard", "Map"];
const ADDRESS =
  "localhost:5000/dashboard?city=Bangalore&result=%7B%27Seshadri+Iyer+Statue%27%3A+%5B77.59034%2C+12.973537%5D%2C+%27Dr.+Vittal+Mallya...";

export default function App() {
  return (
    <Desktop>
      <GlobalStyle />
      <MenuBar>
        <MenuGroup aria-label="Menu bar">
          <FaApple size={16} />
          <MenuItem $strong>Chrome</MenuItem>
          {MENUS.map((m) => <MenuItem key={m}>{m}</MenuItem>)}
        </MenuGroup>
        <StatusGroup>
          <StackIcon />
          <FaBluetoothB size={14} color="#a9b3c9" />
          <WifiIcon />
          <Battery>22% <BatteryIcon /></Battery>
          <StatusText>Mon 12:50 AM</StatusText>
          <StatusText $strong>Sashrika Surya</StatusText>
          <SearchIcon />
          <SiriIcon />
          <ListIcon />
        </StatusGroup>
      </MenuBar>
      <Window>
        <TabStrip>
          <Lights>
            <Light $color="#ff4c42" aria-label="Close window" />
            <Light $color="#ffbd00" aria-label="Minimise window" />
            <Light $color="#00d42b" aria-label="Zoom window" />
          </Lights>
          <Tab>
            <Favicon />
            <TabTitle>Tourly - Dashboard</TabTitle>
            <button aria-label="Close tab"><MdClose size={14} /></button>
          </Tab>
          <NewTab aria-label="New tab"><MdAdd size={18} /></NewTab>
          <TabSearch aria-label="Search tabs"><TabSearchIcon /></TabSearch>
        </TabStrip>
        <Toolbar>
          <ToolButton aria-label="Back"><MdArrowBack size={20} /></ToolButton>
          <ToolButton $faded aria-label="Forward"><MdArrowForward size={20} /></ToolButton>
          <ToolButton aria-label="Reload"><MdRefresh size={20} /></ToolButton>
          <AddressBar>
            <MdInfoOutline size={17} />
            <AddressInput aria-label="Address" defaultValue={ADDRESS} />
            <MdStarBorder size={17} />
          </AddressBar>
          <ToolButton aria-label="Calendar extension"><CalendarExt /></ToolButton>
          <ToolButton aria-label="Hat extension"><HatExt /></ToolButton>
          <ToolButton aria-label="Owl extension"><OwlExt /></ToolButton>
          <ToolButton aria-label="W extension"><WExt /></ToolButton>
          <ToolButton aria-label="Extensions"><MdExtension size={17} /></ToolButton>
          <ToolButton aria-label="Profile"><Avatar /></ToolButton>
          <ToolButton aria-label="More"><MdMoreVert size={20} /></ToolButton>
        </Toolbar>
        <Page>
          <SiteHeader>
            <Brand href="#home">TOURLY</Brand>
            <SiteNav>
              {LINKS.map((l) => (
                <SiteLink key={l} href={`#${l.toLowerCase()}`} $active={l === "Dashboard"}>{l}</SiteLink>
              ))}
            </SiteNav>
          </SiteHeader>
          <Title>Here are your recommended tourist spots!</Title>
          <SpotList>
            {SPOTS.map((s) => <Spot key={s}>{s}</Spot>)}
          </SpotList>
          <MapFrame><CityMap /></MapFrame>
        </Page>
      </Window>
      <DockArea>
        <SharedGradients />
        <Dock aria-label="Dock">
          {DOCK_APPS.map((app) => <DockIcon key={app.name} app={app} />)}
          <DockDivider />
          <Trash />
        </Dock>
      </DockArea>
    </Desktop>
  );
}
